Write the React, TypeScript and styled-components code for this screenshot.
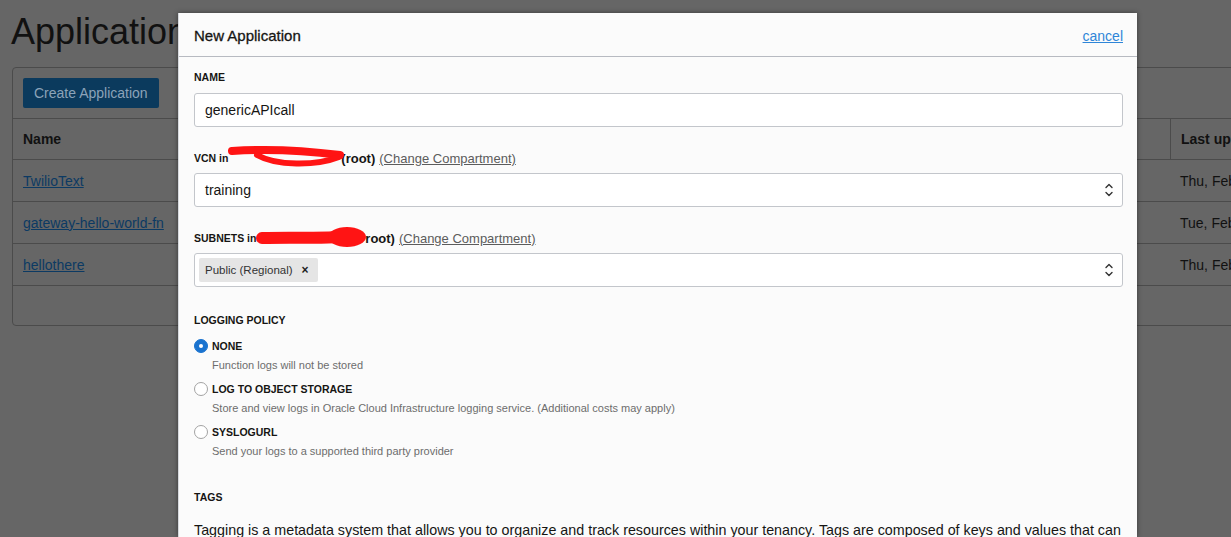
import React from "react";
import styled, { createGlobalStyle } from "styled-components";

const GlobalStyle = createGlobalStyle`
  html, body {
    margin: 0;
    padding: 0;
    height: 100%;
    overflow: hidden;
    background: #666666;
  }
  body {
    font-family: "Liberation Sans", Arial, sans-serif;
  }
`;

const Page = styled.div`
  position: relative;
  min-height: 100vh;
  background: #666666;
  padding: 10px 0 0 11px;
  box-sizing: border-box;
`;

const Title = styled.h1`
  margin: 0;
  font-size: 36px;
  line-height: 44px;
  font-weight: 400;
  color: #111111;
`;

const Panel = styled.div`
  margin: 13px 0 0 1px;
  width: 1320px;
  border: 1px solid #4b4b4b;
  border-radius: 4px;
`;

const Toolbar = styled.div`
  padding: 10px;
`;

const PrimaryButton = styled.button`
  height: 30px;
  padding: 0 11px;
  border: none;
  border-radius: 2px;
  background: #0b3a5d;
  color: #8ba3b9;
  font-family: inherit;
  font-size: 14px;
`;

const Row = styled.div<{ $height: number }>`
  display: grid;
  grid-template-columns: 1157px 1fr;
  height: ${(p) => p.$height}px;
  border-top: 1px solid #4b4b4b;
  box-sizing: border-box;
`;

const Cell = styled.div<{ $head?: boolean; $divider?: boolean }>`
  display: flex;
  align-items: center;
  padding-left: 10px;
  font-size: 14px;
  color: #111111;
  font-weight: ${(p) => (p.$head ? 700 : 400)};
  border-left: ${(p) => (p.$divider ? "1px solid #4b4b4b" : "none")};
`;

const RowLink = styled.a`
  color: #0c3a63;
  text-decoration: underline;
`;

const Modal = styled.div`
  position: absolute;
  left: 178px;
  top: 13px;
  bottom: 0;
  width: 959px;
  background: #fbfbfb;
  box-shadow: 0 0 5px rgba(0, 0, 0, 0.45);
  border-left: 1px solid #d6d9de;
  box-sizing: border-box;
  overflow: hidden;
`;

const ModalHeader = styled.div`
  display: flex;
  align-items: center;
  justify-content: space-between;
  height: 44px;
  padding: 2px 14px 0 15px;
  border-bottom: 1px solid #b7bac1;
  box-sizing: border-box;
`;

const ModalTitle = styled.span`
  font-size: 15px;
  color: #161513;
  -webkit-text-stroke: 0.3px #161513;
`;

const CancelLink = styled.a`
  font-size: 14px;
  color: #2f86d8;
  text-decoration: underline;
`;

const ModalBody = styled.div`
  padding: 12px 14px 0 15px;
`;

const Field = styled.div<{ $space?: number }>`
  margin-bottom: ${(p) => p.$space ?? 23}px;
`;

const Label = styled.div`
  display: flex;
  align-items: center;
  height: 16px;
  font-size: 10.5px;
  font-weight: 700;
  color: #161513;
  white-space: pre;
`;

const RootText = styled.span`
  font-size: 13px;
  font-weight: 700;
`;

const ChangeLink = styled.a`
  margin-left: 4px;
  font-size: 13px;
  font-weight: 400;
  color: #5c5c5c;
  text-decoration: underline;
`;

const Redaction = styled.span<{ $w: number }>`
  position: relative;
  display: inline-block;
  width: ${(p) => p.$w}px;
  height: 16px;
`;

const Scribble = styled.svg`
  position: absolute;
  left: 0;
  top: -3px;
  overflow: visible;
`;

const InputBox = styled.div<{ $gap?: number }>`
  display: flex;
  align-items: center;
  justify-content: space-between;
  height: 34px;
  margin-top: ${(p) => p.$gap ?? 7}px;
  padding: 0 8px 0 10px;
  background: #ffffff;
  border: 1px solid #c3c6cb;
  border-radius: 3px;
  box-sizing: border-box;
  font-size: 14px;
  color: #161513;
`;

const ChipBox = styled(InputBox)`
  padding-left: 4px;
`;

const Chip = styled.span`
  display: inline-flex;
  align-items: center;
  gap: 9px;
  height: 24px;
  padding: 0 9px 0 6px;
  background: #e5e5e5;
  border-radius: 2px;
  font-size: 11.5px;
  color: #333333;
`;

const ChipClose = styled.span`
  font-size: 12px;
  font-weight: 700;
  color: #222222;
`;

const OptionList = styled.div`
  margin-top: 10px;
`;

const Option = styled.div`
  margin-bottom: 9px;
`;

const OptionHead = styled.div`
  display: flex;
  align-items: center;
  gap: 4px;
  height: 16px;
  font-size: 10.5px;
  font-weight: 700;
  color: #161513;
`;

const Radio = styled.span<{ $checked?: boolean }>`
  position: relative;
  width: 14px;
  height: 14px;
  border-radius: 50%;
  box-sizing: border-box;
  background: ${(p) => (p.$checked ? "#1a73cf" : "#ffffff")};
  border: 1px solid ${(p) => (p.$checked ? "#1a73cf" : "#a3a3a3")};

  &::after {
    content: "";
    display: ${(p) => (p.$checked ? "block" : "none")};
    position: absolute;
    left: 4px;
    top: 4px;
    width: 4px;
    height: 4px;
    border-radius: 50%;
    background: #ffffff;
  }
`;

const OptionDesc = styled.div`
  margin-top: 4px;
  padding-left: 18px;
  height: 14px;
  line-height: 14px;
  font-size: 11px;
  color: #6d6d6d;
`;

const Paragraph = styled.p`
  margin: 15px 0 0;
  font-size: 14.3px;
  line-height: 20px;
  color: #161513;
`;

const Chevrons = () => (
  <svg width="10" height="16" viewBox="0 0 10 16" fill="none" stroke="#333" strokeWidth="1.4" strokeLinecap="round" strokeLinejoin="round">
    <path d="M2 5.5 L5 2.5 L8 5.5" />
    <path d="M2 10.5 L5 13.5 L8 10.5" />
  </svg>
);

const rows = [
  { name: "TwilioText", date: "Thu, Feb" },
  { name: "gateway-hello-world-fn", date: "Tue, Feb" },
  { name: "hellothere", date: "Thu, Feb" },
];

const options = [
  { label: "NONE", desc: "Function logs will not be stored", checked: true },
  {
    label: "LOG TO OBJECT STORAGE",
    desc: "Store and view logs in Oracle Cloud Infrastructure logging service. (Additional costs may apply)",
  },
  { label: "SYSLOGURL", desc: "Send your logs to a supported third party provider" },
];

export default function App() {
  return (
    <>
      <GlobalStyle />
      <Page>
        <Title>Applications</Title>
        <Panel>
          <Toolbar>
            <PrimaryButton>Create Application</PrimaryButton>
          </Toolbar>
          <Row $height={41}>
            <Cell $head>Name</Cell>
            <Cell $head $divider>Last updated</Cell>
          </Row>
          {rows.map((r) => (
            <Row key={r.name} $height={42}>
              <Cell>
                <RowLink>{r.name}</RowLink>
              </Cell>
              <Cell>{r.date}</Cell>
            </Row>
          ))}
          <Row $height={40} />
        </Panel>

        <Modal>
          <ModalHeader>
            <ModalTitle>New Application</ModalTitle>
            <CancelLink>cancel</CancelLink>
          </ModalHeader>
          <ModalBody>
            <Field>
              <Label>NAME</Label>
              <InputBox $gap={8}>genericAPIcall</InputBox>
            </Field>

            <Field>
              <Label>
                VCN in{" "}
                <Redaction $w={110}>
                  <Scribble width="110" height="20" viewBox="0 0 110 20">
                    <path d="M1 4 C30 2 70 3 109 8" stroke="#ff1414" strokeWidth="8" fill="none" strokeLinecap="round" />
                    <path d="M26 8 C45 19 85 19 108 10" stroke="#ff1414" strokeWidth="6" fill="none" strokeLinecap="round" />
                  </Scribble>
                </Redaction>
                <RootText>(root)</RootText>
                <ChangeLink>(Change Compartment)</ChangeLink>
              </Label>
              <InputBox>
                training
                <Chevrons />
              </InputBox>
            </Field>

            <Field $space={25}>
              <Label>
                SUBNETS in{" "}
                <Redaction $w={106}>
                  <Scribble width="108" height="22" viewBox="0 0 108 22">
                    <path d="M3 11 C35 10 70 12 96 9" stroke="#ff1414" strokeWidth="12" fill="none" strokeLinecap="round" />
                    <ellipse cx="88" cy="10" rx="19" ry="10" fill="#ff1414" />
                  </Scribble>
                </Redaction>
                <RootText>root)</RootText>
                <ChangeLink>(Change Compartment)</ChangeLink>
              </Label>
              <ChipBox>
                <Chip>
                  Public (Regional)
                  <ChipClose>×</ChipClose>
                </Chip>
                <Chevrons />
              </ChipBox>
            </Field>

            <Field $space={31}>
              <Label>LOGGING POLICY</Label>
              <OptionList>
                {options.map((o) => (
                  <Option key={o.label}>
                    <OptionHead>
                      <Radio $checked={o.checked} />
                      {o.label}
                    </OptionHead>
                    <OptionDesc>{o.desc}</OptionDesc>
                  </Option>
                ))}
              </OptionList>
            </Field>

            <Field>
              <Label>TAGS</Label>
              <Paragraph>
                Tagging is a metadata system that allows you to organize and track resources within your tenancy. Tags are composed of keys and values that can be attached to resources.
              </Paragraph>
            </Field>
          </ModalBody>
        </Modal>
      </Page>
    </>
  );
}
